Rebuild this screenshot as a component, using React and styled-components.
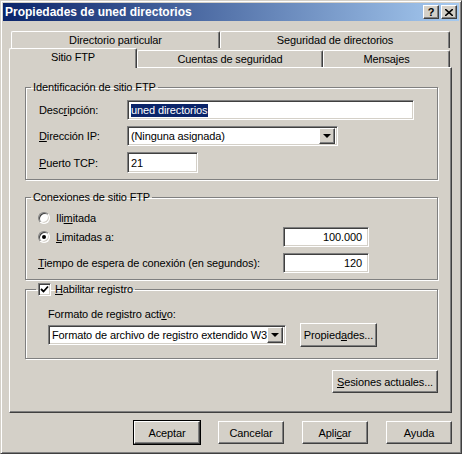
import React from 'react';
import styled, { createGlobalStyle, css } from 'styled-components';

const GlobalStyle = createGlobalStyle`
  body {
    margin: 0;
    background: #ffffff;
    font-family: 'Liberation Sans', Arial, sans-serif;
    font-size: 11px;
    letter-spacing: -0.12px;
    color: #000;
  }
  * { box-sizing: border-box; }
`;

const raised = css`
  border: 1px solid;
  border-color: #ffffff #404040 #404040 #ffffff;
  box-shadow: inset -1px -1px 0 #808080;
`;

const sunken = css`
  border: 1px solid;
  border-color: #808080 #ffffff #ffffff #808080;
  box-shadow: inset 1px 1px 0 #404040, inset -1px -1px 0 #d4d0c8;
`;

const Window = styled.div`
  width: 462px;
  height: 454px;
  background: #d4d0c8;
  border: 1px solid;
  border-color: #d4d0c8 #404040 #404040 #d4d0c8;
  box-shadow: inset 1px 1px 0 #ffffff, inset -1px -1px 0 #808080;
  padding: 2px;
  display: flex;
  flex-direction: column;
`;

const TitleBar = styled.div`
  height: 18px;
  display: flex;
  align-items: center;
  padding: 0 2px 0 2px;
  background: linear-gradient(to right, #0a246a, #a6caf0);
`;

const Title = styled.div`
  flex: 1;
  color: #fff;
  font-weight: bold;
  font-size: 12px;
  letter-spacing: 0;
`;

const CaptionButton = styled.div`
  ${raised};
  width: 16px;
  height: 14px;
  margin-left: 2px;
  background: #d4d0c8;
  display: flex;
  align-items: center;
  justify-content: center;
  font-weight: bold;
  font-size: 11px;
  line-height: 1;
`;

const TabArea = styled.div`
  margin: 11px 7px 0 6px;
  display: flex;
  flex-direction: column;
`;

const TabRow = styled.div`
  display: flex;
  align-items: flex-end;
  height: ${p => p.$height}px;
  padding-left: ${p => p.$inset}px;
`;

const Tab = styled.div`
  position: relative;
  width: ${p => p.$w}px;
  height: ${p => (p.$active ? 20 : 17)}px;
  margin-bottom: ${p => (p.$active ? -1 : 0)}px;
  z-index: ${p => (p.$active ? 2 : 1)};
  background: #d4d0c8;
  border-top: 1px solid #fff;
  border-left: 1px solid #fff;
  border-right: 1px solid #404040;
  border-radius: 2px 2px 0 0;
  box-shadow: inset -1px 0 0 #808080;
  display: flex;
  justify-content: center;
  padding-top: 2px;
`;

const Panel = styled.div`
  height: 346px;
  background: #d4d0c8;
  border: 1px solid;
  border-color: #ffffff #404040 #404040 #ffffff;
  box-shadow: inset -1px -1px 0 #808080;
  padding: 13px 13px 0 15px;
  display: flex;
  flex-direction: column;
`;

const Group = styled.fieldset`
  margin: ${p => p.$top || 0}px 0 0 0;
  padding: 0;
  border: 1px solid #808080;
  box-shadow: inset 1px 1px 0 #fff, 1px 1px 0 #fff;
  min-width: 0;
`;

const Legend = styled.legend`
  margin-left: ${p => p.$ml || 5}px;
  padding: 0 2px;
  line-height: 13px;
  display: flex;
  align-items: center;
  gap: 4px;
`;

const GroupBody = styled.div`
  padding: ${p => p.$pad};
`;

const FieldGrid = styled.div`
  display: grid;
  grid-template-columns: 88px auto;
  row-gap: 6px;
  align-items: center;
  padding-left: 13px;
`;

const Input = styled.div`
  ${sunken};
  width: ${p => p.$w}px;
  height: ${p => p.$h || 20}px;
  background: #fff;
  display: flex;
  align-items: center;
  justify-content: ${p => (p.$right ? 'flex-end' : 'flex-start')};
  padding: 0 ${p => (p.$right ? 6 : 3)}px 0 3px;
  white-space: nowrap;
  overflow: hidden;
`;

const Selected = styled.span`
  background: #0a246a;
  color: #fff;
  padding: 0 1px 1px 0;
`;

const Select = styled(Input)`
  padding-right: 2px;
`;

const SelectText = styled.span`
  flex: 1;
  min-width: 0;
  overflow: hidden;
  white-space: nowrap;
`;

const DropButton = styled.div`
  ${raised};
  width: 16px;
  height: 16px;
  flex: none;
  background: #d4d0c8;
  display: flex;
  align-items: center;
  justify-content: center;
`;

const Arrow = styled.span`
  width: 0;
  height: 0;
  border-left: 4px solid transparent;
  border-right: 4px solid transparent;
  border-top: 4px solid #000;
`;

const OptionRow = styled.div`
  display: flex;
  align-items: center;
  justify-content: space-between;
  height: ${p => p.$h}px;
  margin-top: ${p => p.$top}px;
  padding-left: 12px;
  padding-right: 68px;
`;

const RadioLabel = styled.label`
  display: flex;
  align-items: center;
  gap: 6px;
`;

const Radio = styled.span`
  width: 12px;
  height: 12px;
  border-radius: 50%;
  background: #fff;
  border: 1px solid;
  border-color: #808080 #ffffff #ffffff #808080;
  box-shadow: inset 1px 1px 0 #404040, inset -1px -1px 0 #d4d0c8;
  display: flex;
  align-items: center;
  justify-content: center;
  &::after {
    content: '';
    width: 4px;
    height: 4px;
    border-radius: 50%;
    background: ${p => (p.$on ? '#000' : 'transparent')};
  }
`;

const Check = styled.span`
  ${sunken};
  width: 13px;
  height: 13px;
  background: #fff;
  display: flex;
  align-items: center;
  justify-content: center;
`;

const Caption = styled.div`
  margin-bottom: 3px;
`;

const LogRow = styled.div`
  display: flex;
  align-items: center;
  gap: 14px;
`;

const Button = styled.div`
  ${raised};
  width: ${p => p.$w}px;
  height: ${p => p.$h || 23}px;
  background: #d4d0c8;
  display: flex;
  align-items: center;
  justify-content: center;
  ${p => p.$default && css`
    outline: 1px solid #000;
    outline-offset: 0;
  `}
`;

const RightRow = styled.div`
  display: flex;
  justify-content: flex-end;
  margin-top: ${p => p.$top}px;
  gap: 18px;
`;

const Footer = styled(RightRow)`
  margin: 8px 7px 0 0;
`;

export default function App() {
  return (
    <>
      <GlobalStyle />
      <Window>
        <TitleBar>
          <Title>Propiedades de uned directorios</Title>
          <CaptionButton>?</CaptionButton>
          <CaptionButton>
            <svg width="8" height="7" viewBox="0 0 8 7">
              <path d="M0 0 L8 7 M8 0 L0 7" stroke="#000" strokeWidth="1.6" />
            </svg>
          </CaptionButton>
        </TitleBar>

        <TabArea>
          <TabRow $height={16} $inset={2}>
            <Tab $w={209}>Directorio particular</Tab>
            <Tab $w={230}>Seguridad de directorios</Tab>
          </TabRow>
          <TabRow $height={19} $inset={0}>
            <Tab $w={128} $active>Sitio FTP</Tab>
            <Tab $w={186}>Cuentas de seguridad</Tab>
            <Tab $w={127}>Mensajes</Tab>
          </TabRow>
          <Panel>
            <Group>
              <Legend>Identificación de sitio FTP</Legend>
              <GroupBody $pad="6px 10px 6px 0">
                <FieldGrid>
                  <span>Desc<u>r</u>ipción:</span>
                  <Input $w={287}><Selected>uned directorios</Selected></Input>
                  <span><u>D</u>irección IP:</span>
                  <Select $w={211}>
                    <SelectText>(Ninguna asignada)</SelectText>
                    <DropButton><Arrow /></DropButton>
                  </Select>
                  <span><u>P</u>uerto TCP:</span>
                  <Input $w={71} $h={21}>21</Input>
                </FieldGrid>
              </GroupBody>
            </Group>

            <Group $top={11}>
              <Legend>Conexiones de sitio FTP</Legend>
              <GroupBody $pad="0 0 6px 0">
                <OptionRow $h={13} $top={7}>
                  <RadioLabel><Radio /><span>Ili<u>m</u>itada</span></RadioLabel>
                </OptionRow>
                <OptionRow $h={20} $top={3}>
                  <RadioLabel><Radio $on /><span><u>L</u>imitadas a:</span></RadioLabel>
                  <Input $w={86} $right>100.000</Input>
                </OptionRow>
                <OptionRow $h={20} $top={6}>
                  <span><u>T</u>iempo de espera de conexión (en segundos):</span>
                  <Input $w={86} $right>120</Input>
                </OptionRow>
              </GroupBody>
            </Group>

            <Group $top={3}>
              <Legend $ml={10}>
                <Check>
                  <svg width="9" height="9" viewBox="0 0 9 9">
                    <path d="M1 4 L3.5 6.5 L8 1.5" stroke="#000" strokeWidth="1.8" fill="none" />
                  </svg>
                </Check>
                <span><u>H</u>abilitar registro</span>
              </Legend>
              <GroupBody $pad="12px 0 11px 22px">
                <Caption>Formato de registro acti<u>v</u>o:</Caption>
                <LogRow>
                  <Select $w={238}>
                    <SelectText>Formato de archivo de registro extendido W3C</SelectText>
                    <DropButton><Arrow /></DropButton>
                  </Select>
                  <Button $w={77} $h={24}><span>Propied<u>a</u>des...</span></Button>
                </LogRow>
              </GroupBody>
            </Group>

            <RightRow $top={11}>
              <Button $w={106}><span><u>S</u>esiones actuales...</span></Button>
            </RightRow>
          </Panel>
        </TabArea>

        <Footer>
          <Button $w={66} $default>Aceptar</Button>
          <Button $w={66}>Cancelar</Button>
          <Button $w={66}><span>Apli<u>c</u>ar</span></Button>
          <Button $w={66}>Ayuda</Button>
        </Footer>
      </Window>
    </>
  );
}
